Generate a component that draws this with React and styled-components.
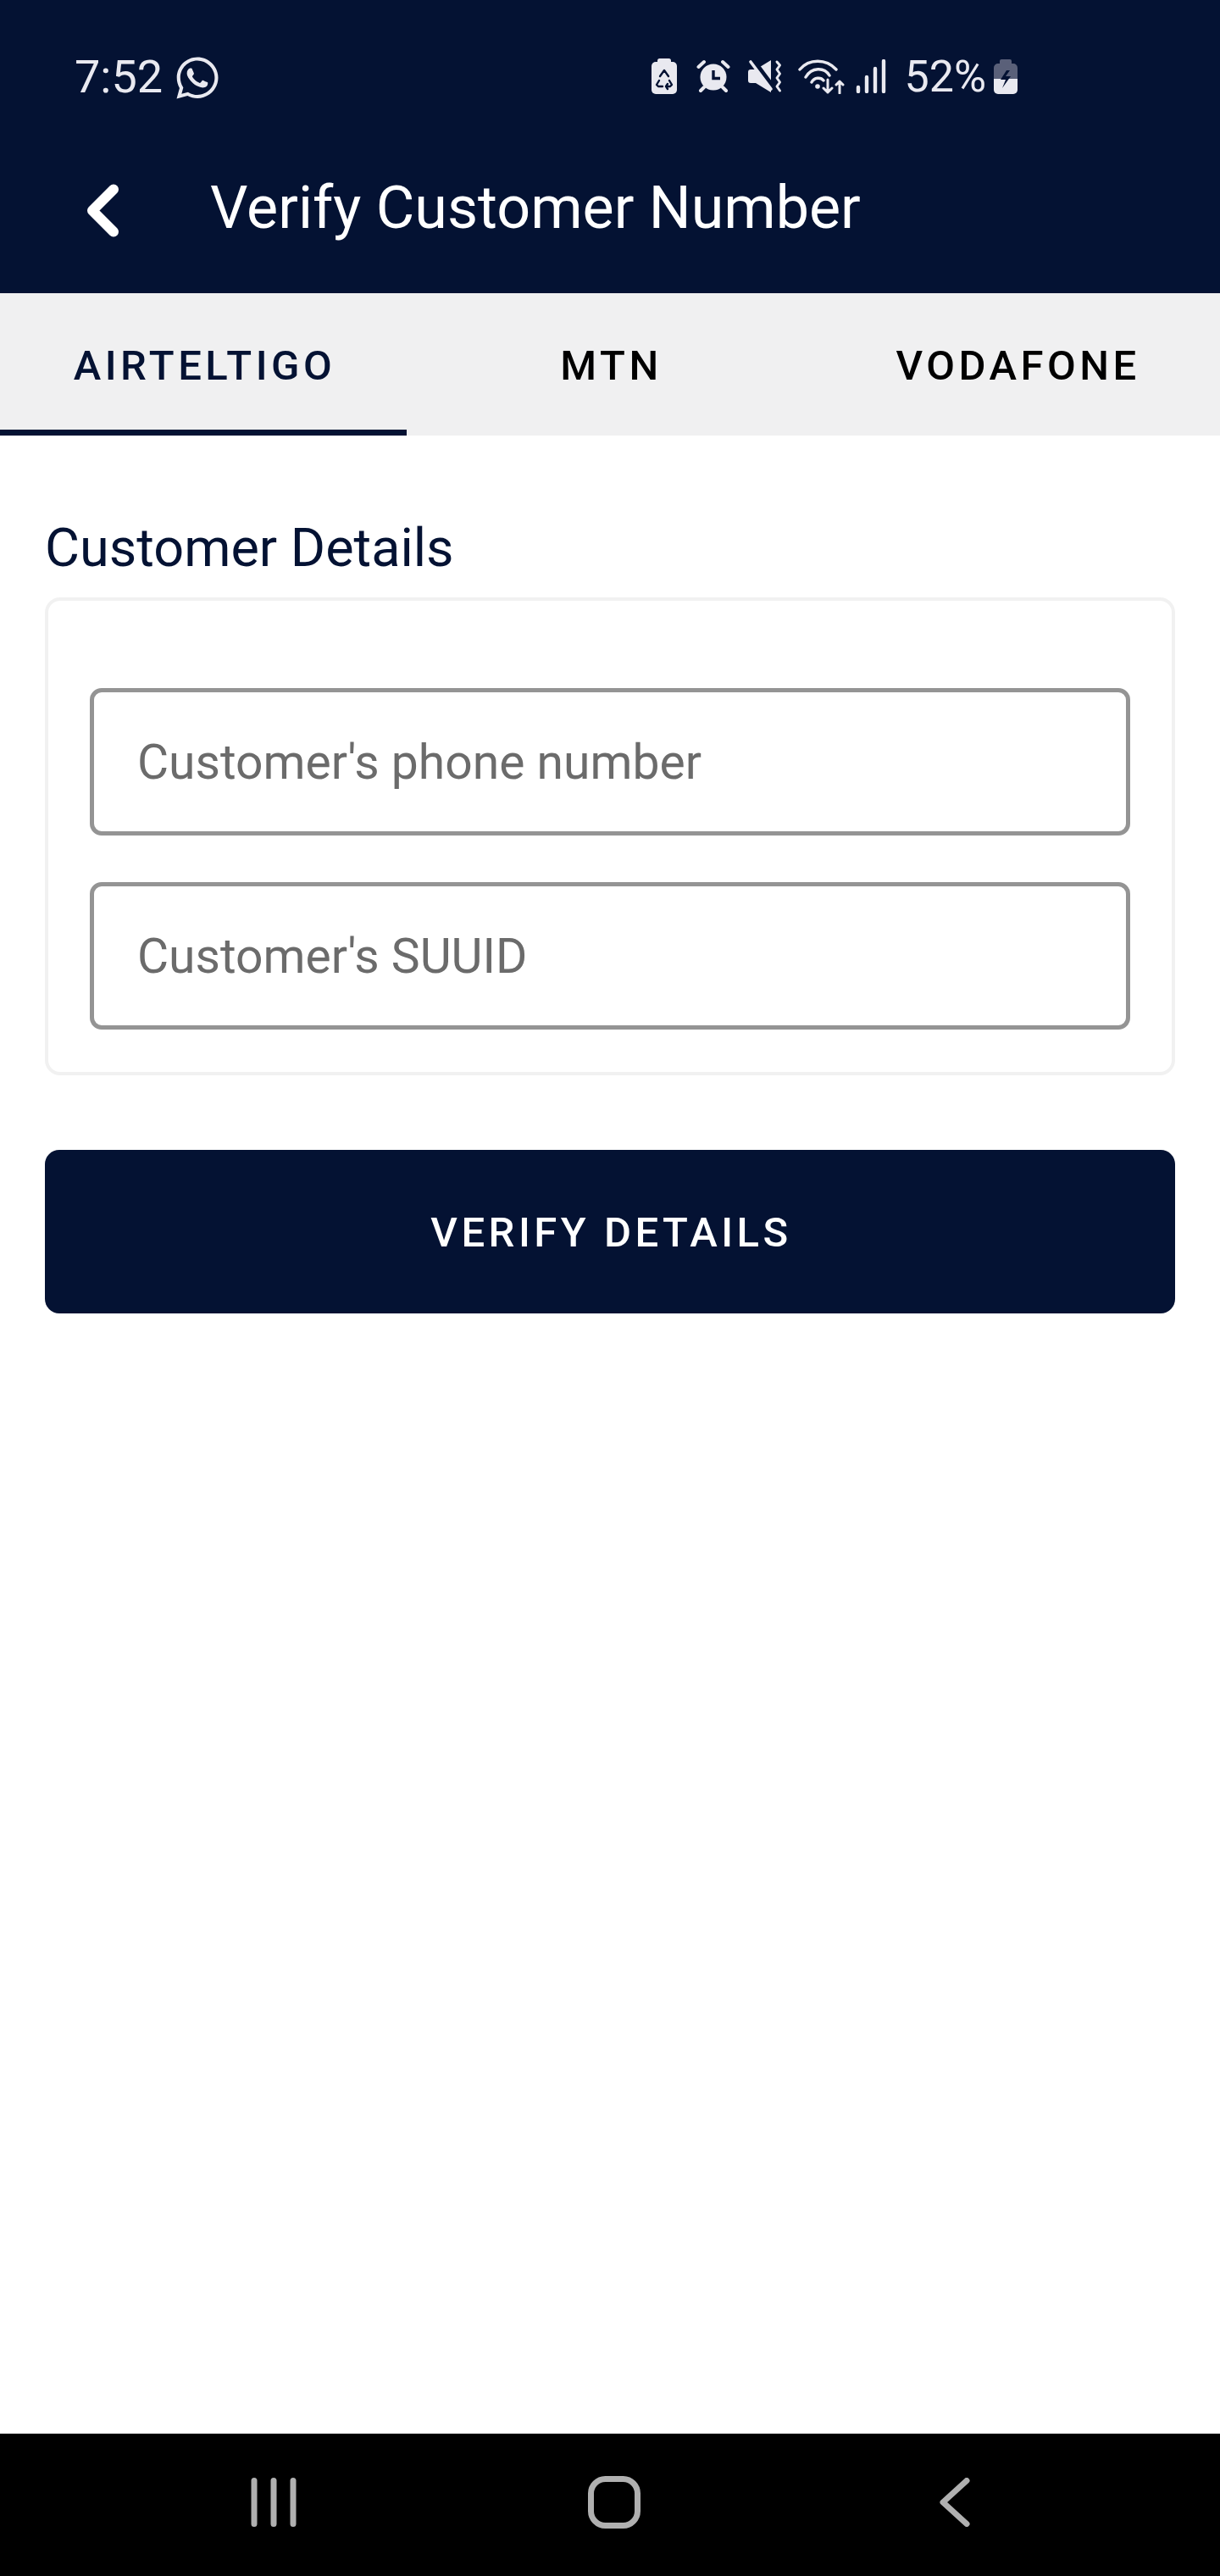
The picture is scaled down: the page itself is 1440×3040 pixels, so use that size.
import styled, { createGlobalStyle } from "styled-components";
import { FaWhatsapp } from "react-icons/fa";

const NAVY = "#041233";
const ICON = "#e9e9f0";

const App = () => {
  return (
    <Page>
      <GlobalStyle />
      <Header>
        <StatusBar>
          <Clock>
            <span>7:52</span>
            <FaWhatsapp size={56} />
          </Clock>
          <StatusIcons>
            <Glyph width="30" height="42" viewBox="0 0 30 42">
              <rect x="7" y="0" width="16" height="8" rx="2.5" fill={ICON} />
              <rect x="0" y="4" width="30" height="38" rx="5" fill={ICON} />
              <path
                d="M10 21l5-7 5 7M9 26l-3 5 2 2h5M17 33h5l2-2-3-5M19 30l-2 3 2 3"
                fill="none"
                stroke={NAVY}
                strokeWidth="2.4"
                strokeLinecap="round"
                strokeLinejoin="round"
              />
            </Glyph>
            <Glyph $gap={23} width="40" height="40" viewBox="0 0 40 40">
              <circle cx="20" cy="21" r="15.5" fill={ICON} />
              <path
                d="M2.5 9L9 3M37.5 9L31 3M5 37l4-4M35 37l-4-4"
                stroke={ICON}
                strokeWidth="4"
                strokeLinecap="round"
              />
              <path
                d="M20 13v9.5h8"
                fill="none"
                stroke={NAVY}
                strokeWidth="3.4"
              />
            </Glyph>
            <Glyph $gap={21} width="40" height="40" viewBox="0 0 40 40">
              <path
                d="M3 12h6L27 1v38L9 28H3a3 3 0 0 1-3-3v-10a3 3 0 0 1 3-3z"
                fill={ICON}
              />
              <path d="M2 -3L32 37" stroke={NAVY} strokeWidth="7" />
              <path
                d="M3 3L27 35"
                stroke={ICON}
                strokeWidth="3.6"
                strokeLinecap="round"
              />
              <path
                d="M34 3l3.5 4-3.5 5 3.5 5-3.5 5 3.5 5-3.5 5 3.5 5"
                fill="none"
                stroke={ICON}
                strokeWidth="3"
                strokeLinecap="round"
                strokeLinejoin="round"
              />
            </Glyph>
            <Glyph $gap={19} width="55" height="41" viewBox="0 0 55 41">
              <path
                d="M2 12C13 -1 33 -1 45 12M9 21C16 9 31 9 37 19M16 27C19 21 27 21 30 25"
                fill="none"
                stroke={ICON}
                strokeWidth="3.4"
                strokeLinecap="round"
              />
              <circle cx="23" cy="32" r="2.8" fill={ICON} />
              <path
                d="M35 24v15M30 34l5 5 5-5M49 40V26M45 30l4-4 4 4"
                fill="none"
                stroke={ICON}
                strokeWidth="3"
                strokeLinecap="round"
                strokeLinejoin="round"
              />
            </Glyph>
            <Glyph $gap={13} width="36" height="40" viewBox="0 0 36 40">
              <path
                d="M3 33v5M13 21v17M23 11v27M33 2v36"
                stroke={ICON}
                strokeWidth="4.4"
                strokeLinecap="round"
              />
            </Glyph>
            <Percent>52%</Percent>
            <Glyph $gap={9} width="28" height="41" viewBox="0 0 28 41">
              <path
                d="M9 0h10a2 2 0 0 1 2 2v3h2a5 5 0 0 1 5 5v13H0V10a5 5 0 0 1 5-5h2V2a2 2 0 0 1 2-2z"
                fill="#5a6079"
              />
              <path d="M0 23h28v13a5 5 0 0 1-5 5H5a5 5 0 0 1-5-5z" fill={ICON} />
              <path d="M15 13L8 24h6l-4 10 10-14h-6l5-7z" fill={NAVY} />
            </Glyph>
          </StatusIcons>
        </StatusBar>
        <Toolbar>
          <BackButton width="40" height="65" viewBox="0 0 40 65">
            <path
              d="M33 7.5L8 32.5l25 25"
              fill="none"
              stroke="#ffffff"
              strokeWidth="12"
              strokeLinecap="round"
              strokeLinejoin="round"
            />
          </BackButton>
          <Title>Verify Customer Number</Title>
        </Toolbar>
      </Header>

      <Tabs>
        <Tab $active>AIRTELTIGO</Tab>
        <Tab>MTN</Tab>
        <Tab>VODAFONE</Tab>
      </Tabs>

      <Main>
        <Heading>Customer Details</Heading>
        <Card>
          <Field placeholder="Customer's phone number" />
          <Field placeholder="Customer's SUUID" />
        </Card>
        <VerifyButton>VERIFY DETAILS</VerifyButton>
      </Main>

      <NavBar>
        <NavIcon width="54" height="58" viewBox="0 0 54 58">
          <path d="M4 3.5v51M27 3.5v51M50 3.5v51" />
        </NavIcon>
        <NavIcon width="62" height="62" viewBox="0 0 62 62">
          <rect x="3.5" y="3.5" width="55" height="55" rx="17" />
        </NavIcon>
        <NavIcon width="36" height="58" viewBox="0 0 36 58">
          <path d="M32 3.5L4 29l28 25.5" />
        </NavIcon>
      </NavBar>
    </Page>
  );
};

export default App;

const GlobalStyle = createGlobalStyle`
  body {
    margin: 0;
    background: #ffffff;
    font-family: Roboto, "Liberation Sans", sans-serif;
  }
`;

const Page = styled.div`
  width: 1440px;
  height: 3040px;
  display: flex;
  flex-direction: column;
`;

const Header = styled.header`
  height: 346px;
  background-color: ${NAVY};
`;

const StatusBar = styled.div`
  height: 180px;
  padding: 0 239px 0 88px;
  display: flex;
  align-items: center;
  justify-content: space-between;
  color: ${ICON};
`;

const Clock = styled.div`
  display: flex;
  align-items: center;
  gap: 13px;
  font-size: 54px;

  svg {
    margin-top: 3px;
  }
`;

const StatusIcons = styled.div`
  display: flex;
  align-items: center;
`;

const Glyph = styled.svg`
  display: block;
  flex: none;
  margin-left: ${(props) => props.$gap || 0}px;
`;

const Percent = styled.span`
  margin-left: 21px;
  font-size: 52px;
`;

const Toolbar = styled.div`
  height: 136px;
  padding-left: 101px;
  display: flex;
  align-items: center;
  gap: 107px;
`;

const BackButton = styled.svg`
  display: block;
  flex: none;
`;

const Title = styled.h1`
  margin: 0 0 6px;
  font-size: 70px;
  font-weight: 400;
  color: #ffffff;
`;

const Tabs = styled.nav`
  height: 168px;
  display: grid;
  grid-template-columns: repeat(3, 480px);
  background-color: #f0f0f1;
`;

const Tab = styled.div`
  padding: 3px 0 0 3px;
  display: flex;
  align-items: center;
  justify-content: center;
  font-size: 49px;
  font-weight: 500;
  letter-spacing: 4.5px;
  color: ${(props) => (props.$active ? NAVY : "#000000")};
  box-shadow: ${(props) => (props.$active ? `inset 0 -7px 0 ${NAVY}` : "none")};
`;

const Main = styled.main`
  flex: 1;
  padding: 98px 53px 0;
`;

const Heading = styled.h2`
  margin: 0 0 23px;
  font-size: 63px;
  line-height: 70px;
  font-weight: 400;
  color: ${NAVY};
`;

const Card = styled.div`
  display: flex;
  flex-direction: column;
  gap: 55px;
  padding: 103px 49px 50px;
  border: 4px solid #f1f1f1;
  border-radius: 18px;
`;

const Field = styled.input`
  box-sizing: border-box;
  width: 100%;
  height: 174px;
  padding: 0 51px;
  border: 5px solid #949494;
  border-radius: 14px;
  background: #ffffff;
  font-family: Roboto, "Liberation Sans", sans-serif;
  font-size: 57px;
  color: #6b6b6b;

  &::placeholder {
    color: #6b6b6b;
    opacity: 1;
  }
`;

const VerifyButton = styled.button`
  display: block;
  width: 100%;
  height: 193px;
  margin-top: 88px;
  padding: 2px 0 0 3px;
  border: 0;
  border-radius: 17px;
  background-color: ${NAVY};
  font-family: Roboto, "Liberation Sans", sans-serif;
  font-size: 49px;
  font-weight: 500;
  letter-spacing: 4.5px;
  color: #ffffff;
`;

const NavBar = styled.footer`
  box-sizing: border-box;
  height: 168px;
  padding: 0 0 6px 122px;
  display: grid;
  grid-template-columns: repeat(3, 402px);
  justify-items: center;
  align-items: center;
  background-color: #000000;
`;

const NavIcon = styled.svg`
  display: block;
  fill: none;
  stroke: #b0b0b0;
  stroke-width: 7;
  stroke-linecap: round;
  stroke-linejoin: round;
`;
